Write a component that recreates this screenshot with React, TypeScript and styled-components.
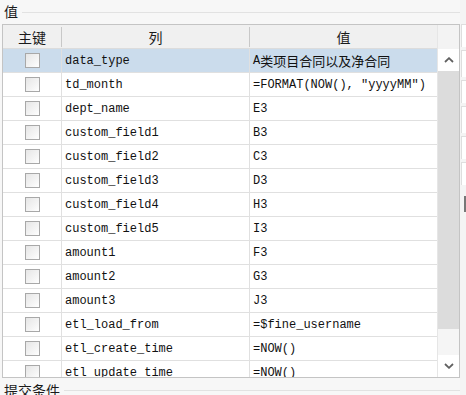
import React from "react";
import styled, { createGlobalStyle } from "styled-components";

const GlobalStyle = createGlobalStyle`
    html, body {
        margin: 0;
        padding: 0;
        background: #f7f7f7;
    }
`;

interface IRow {
    name: string;
    value: string;
}

const rows: IRow[] = [
    { name: "data_type", value: "A类项目合同以及净合同" },
    { name: "td_month", value: '=FORMAT(NOW(), "yyyyMM")' },
    { name: "dept_name", value: "E3" },
    { name: "custom_field1", value: "B3" },
    { name: "custom_field2", value: "C3" },
    { name: "custom_field3", value: "D3" },
    { name: "custom_field4", value: "H3" },
    { name: "custom_field5", value: "I3" },
    { name: "amount1", value: "F3" },
    { name: "amount2", value: "G3" },
    { name: "amount3", value: "J3" },
    { name: "etl_load_from", value: "=$fine_username" },
    { name: "etl_create_time", value: "=NOW()" },
    { name: "etl_update_time", value: "=NOW()" },
];

// CJK chars in the value column are drawn a bit larger than the ASCII ones
const renderValue = (text: string) => {
    const parts = text.split(/([\u4e00-\u9fff]+)/);
    return parts.map((p, i) =>
        /[\u4e00-\u9fff]/.test(p) ? <Cjk key={i}>{p}</Cjk> : <span key={i}>{p}</span>
    );
};

const App: React.FC = () => {
    return (
        <Page>
            <GlobalStyle />
            <Main>
                <Legend>
                    <span className="legend-text">值</span>
                    <span className="legend-line" />
                </Legend>
                <Frame>
                    <Grid>
                        <HeaderRow>
                            <HeaderCell>主键</HeaderCell>
                            <HeaderCell>列</HeaderCell>
                            <HeaderCell>值</HeaderCell>
                        </HeaderRow>
                        {rows.map((row, i) => (
                            <Row key={i} $selected={i === 0}>
                                <CheckCell>
                                    <Checkbox />
                                </CheckCell>
                                <TextCell>{row.name}</TextCell>
                                <TextCell>{renderValue(row.value)}</TextCell>
                            </Row>
                        ))}
                    </Grid>
                    <Scrollbar>
                        <div className="corner" />
                        <ScrollButton>
                            <svg width="10" height="6" viewBox="0 0 10 6">
                                <path d="M1 5 L5 1.2 L9 5" fill="none" stroke="#606060" strokeWidth="1.8" />
                            </svg>
                        </ScrollButton>
                        <div className="track">
                            <div className="thumb" />
                        </div>
                        <ScrollButton>
                            <svg width="10" height="6" viewBox="0 0 10 6">
                                <path d="M1 1 L5 4.8 L9 1" fill="none" stroke="#606060" strokeWidth="1.8" />
                            </svg>
                        </ScrollButton>
                    </Scrollbar>
                </Frame>
                <Legend $bottom>
                    <span className="legend-text">提交条件</span>
                    <span className="legend-line" />
                </Legend>
            </Main>
            <SidePanel>
                <div className="box" style={{ height: 22 }} />
                <div className="box" style={{ height: 26 }} />
                <div className="box" style={{ height: 22 }} />
                <div className="box" style={{ height: 26 }} />
                <div className="box" style={{ height: 22 }} />
                <div className="box" style={{ height: 22 }} />
                <div className="grip" />
            </SidePanel>
        </Page>
    );
};

const Page = styled.div`
    width: 466px;
    height: 395px;
    overflow: hidden;
    display: flex;
    background: #f7f7f7;
`;

const Main = styled.div`
    width: 460px;
    display: flex;
    flex-direction: column;
    flex-shrink: 0;
`;

const Legend = styled.div<{ $bottom?: boolean }>`
    height: ${(p) => (p.$bottom ? "17px" : "24px")};
    flex-shrink: 0;
    display: flex;
    align-items: flex-start;
    padding: ${(p) => (p.$bottom ? "2px 0 0 4px" : "1px 0 0 4px")};
    box-sizing: border-box;
    font-family: "Noto Sans CJK SC", sans-serif;
    font-size: 14px;
    color: #1a1a1a;

    .legend-text {
        line-height: 20px;
        white-space: nowrap;
    }

    .legend-line {
        flex: 1;
        height: 1px;
        background: #e2e2e2;
        margin-left: 4px;
        margin-top: ${(p) => (p.$bottom ? "10px" : "11px")};
    }
`;

const Frame = styled.div`
    margin-left: 2px;
    width: 458px;
    height: 354px;
    flex-shrink: 0;
    box-sizing: border-box;
    border: 1px solid #c4c4c4;
    display: flex;
    background: #ffffff;
    overflow: hidden;
`;

const Grid = styled.div`
    width: 435px;
    display: flex;
    flex-direction: column;
    overflow: hidden;
`;

const columns = "59px 188px 188px";

const HeaderRow = styled.div`
    display: grid;
    grid-template-columns: ${columns};
    height: 23px;
    flex-shrink: 0;
    background: #f0f0f0;
    border-bottom: 1px solid #dcdcdc;
`;

const HeaderCell = styled.div`
    display: flex;
    align-items: center;
    justify-content: center;
    font-family: "Noto Sans CJK SC", sans-serif;
    font-size: 14px;
    color: #1a1a1a;
    border-right: 1px solid #c8c8c8;
    margin: 2px 0;
`;

const Row = styled.div<{ $selected?: boolean }>`
    display: grid;
    grid-template-columns: ${columns};
    height: 24px;
    flex-shrink: 0;
    background: ${(p) => (p.$selected ? "#cbdcec" : "#ffffff")};
`;

const CheckCell = styled.div`
    display: flex;
    align-items: center;
    justify-content: center;
    border-right: 1px solid #e0e0e0;
    border-bottom: 1px solid #e0e0e0;
`;

const Checkbox = styled.div`
    width: 13px;
    height: 13px;
    border: 1px solid #a8a8a8;
    background: linear-gradient(135deg, #e6e6e6 0%, #f4f4f4 60%, #ffffff 100%);
`;

const TextCell = styled.div`
    display: flex;
    align-items: center;
    padding-left: 3px;
    border-right: 1px solid #e0e0e0;
    border-bottom: 1px solid #e0e0e0;
    font-family: "Liberation Mono", "Noto Sans CJK SC", monospace;
    font-size: 12px;
    color: #111111;
    white-space: nowrap;
    overflow: hidden;
`;

const Cjk = styled.span`
    font-family: "Noto Sans CJK SC", sans-serif;
    font-size: 13px;
`;

const Scrollbar = styled.div`
    width: 21px;
    display: flex;
    flex-direction: column;
    background: #f4f4f4;
    border-left: 1px solid #e6e6e6;

    .corner {
        height: 24px;
        flex-shrink: 0;
        background: #f3f3f3;
    }

    .track {
        flex: 1;
        display: flex;
        flex-direction: column;
        background: #f5f5f5;
    }

    .thumb {
        height: 258px;
        background: #dcdcdc;
    }
`;

const ScrollButton = styled.div`
    height: 22px;
    flex-shrink: 0;
    display: flex;
    align-items: center;
    justify-content: center;
    background: #ffffff;
`;

const SidePanel = styled.div`
    flex: 1;
    display: flex;
    flex-direction: column;
    gap: 3px;
    padding-top: 24px;
    padding-left: 1px;
    background: #f4f4f4;

    .box {
        background: #ffffff;
        border-top: 1px solid #dedede;
        border-left: 1px solid #dedede;
    }

    .grip {
        margin-top: 8px;
        margin-left: 3px;
        width: 2px;
        height: 16px;
        background: #777777;
    }
`;

export default App;
